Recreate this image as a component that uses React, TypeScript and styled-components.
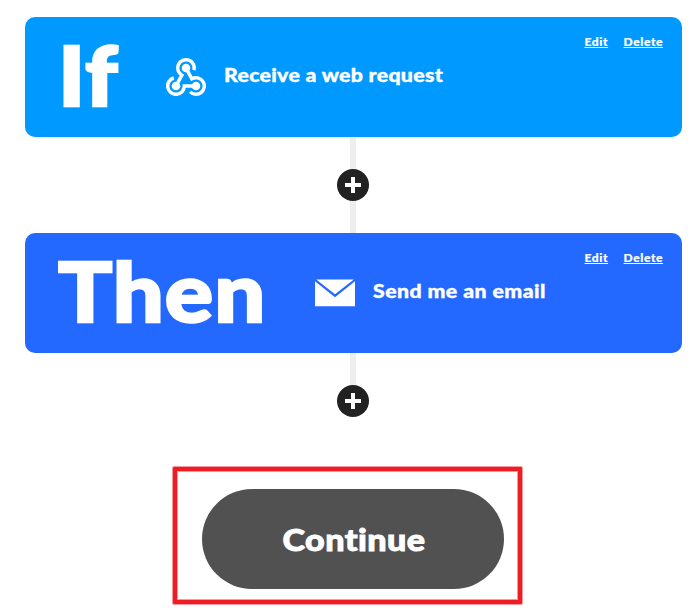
import React from 'react';
import styled, { createGlobalStyle } from 'styled-components';

const GlobalStyle = createGlobalStyle`
  * { box-sizing: border-box; }
  body { margin: 0; background: #fff; font-family: Lato, sans-serif; }
`;

const Page = styled.main`
  width: 694px;
  height: 612px;
  padding: 17px 12px 0 25px;
  display: flex;
  flex-direction: column;
  overflow: hidden;
`;

const Card = styled.section<{ $color: string; $inset: number }>`
  position: relative;
  height: 120px;
  flex: none;
  display: flex;
  align-items: flex-start;
  padding-left: ${(p) => p.$inset}px;
  border-radius: 10px;
  background: ${(p) => p.$color};
  color: #fff;
`;

const Keyword = styled.h1<{ $width: number; $spacing: number }>`
  flex: none;
  width: ${(p) => p.$width}px;
  margin: 5px 0 0;
  font-size: 82px;
  line-height: 104px;
  font-weight: 900;
  letter-spacing: ${(p) => p.$spacing}px;
  -webkit-text-stroke: 2.4px #fff;
  white-space: nowrap;
  transform: scaleX(1.1);
  transform-origin: 0 50%;
`;

const IconSlot = styled.span`
  flex: none;
  width: 40px;
  height: 40px;
  margin: 40px 18px 0 0;
  svg { display: block; }
`;

const Title = styled.h2<{ $spacing: number }>`
  margin: 46px 0 0;
  font-size: 19.5px;
  line-height: 24px;
  font-weight: 900;
  letter-spacing: ${(p) => p.$spacing}px;
  -webkit-text-stroke: 0.4px #fff;
  white-space: nowrap;
  transform: scaleX(1.09);
  transform-origin: 0 50%;
`;

const Actions = styled.nav`
  position: absolute;
  top: 17px;
  right: 19px;
  display: flex;
  gap: 15.5px;
`;

const Action = styled.a`
  color: #fff;
  font-size: 12px;
  line-height: 16px;
  font-weight: 900;
  letter-spacing: 0.6px;
  -webkit-text-stroke: 0.2px #fff;
  text-decoration: underline;
`;

const Connector = styled.div<{ $height: number }>`
  flex: none;
  margin-left: 312px;
  height: ${(p) => p.$height}px;
  width: 32px;
  display: flex;
  align-items: center;
  justify-content: center;
  background: linear-gradient(#eee, #eee) 13px 0 / 6px 100% no-repeat;
`;

const AddButton = styled.button`
  width: 32px;
  height: 32px;
  flex: none;
  padding: 0;
  border: 0;
  border-radius: 50%;
  background: #222;
  svg { display: block; }
`;

const Tail = styled(Connector)`
  align-items: flex-end;
`;

const Highlight = styled.div`
  width: 349px;
  height: 137px;
  flex: none;
  margin: 50px 0 0 148px;
  padding: 18px 0 0 25px;
  border: 4px solid #ee1c25;
  border-radius: 1px;
  box-shadow: 0 0 0 1px rgba(238, 28, 37, 0.45), inset 0 0 0 1px rgba(238, 28, 37, 0.45);
`;

const Continue = styled.button`
  display: block;
  width: 302px;
  height: 100px;
  padding: 0;
  border: 0;
  border-radius: 50px;
  background: #515151;
  color: #fff;
  font: 900 31px/40px Lato, sans-serif;
  letter-spacing: 0.4px;
`;

const ContinueLabel = styled.span`
  display: inline-block;
  -webkit-text-stroke: 0.9px #fff;
  transform: translateX(1px) scaleX(1.1);
`;

const WebhookIcon = () => (
  <svg width="40" height="40" viewBox="0 0 40 40" fill="none" stroke="#fff" strokeWidth="3.5">
    <g transform="translate(0 1)">
      <path d="M28 12.1A8.3 8.3 0 1 0 15.85 17.19L10 28" />
      <path d="M7.85 19.98A8.3 8.3 0 1 0 18.3 28H30" />
      <path d="M24.13 33.87A8.3 8.3 0 1 0 25.85 20.81L20 10" />
      <g fill="#fff" stroke="none">
        <circle cx="20" cy="10" r="4.3" />
        <circle cx="10" cy="28" r="4.3" />
        <circle cx="30" cy="28" r="4.3" />
      </g>
    </g>
  </svg>
);

const MailIcon = () => (
  <svg width="40" height="40" viewBox="0 0 40 40" fill="#fff">
    <path d="M1.2 6.5H38.8L20 21.2ZM0 8.2L20 24.2L40 8.2V33.3H0Z" />
  </svg>
);

const Plus = () => (
  <AddButton aria-label="Add">
    <svg width="32" height="32" viewBox="0 0 32 32" fill="#fff">
      <path d="M14 8h4v6h6v4h-6v6h-4v-6H8v-4h6z" />
    </svg>
  </AddButton>
);

const CardActions = () => (
  <Actions>
    <Action>Edit</Action>
    <Action>Delete</Action>
  </Actions>
);

export default function App() {
  return (
    <>
      <GlobalStyle />
      <Page>
        <Card $color="#0099ff" $inset={33}>
          <Keyword $width={108} $spacing={1}>If</Keyword>
          <IconSlot><WebhookIcon /></IconSlot>
          <Title $spacing={0.3}>Receive a web request</Title>
          <CardActions />
        </Card>
        <Connector $height={96}><Plus /></Connector>
        <Card $color="#2369ff" $inset={33}>
          <Keyword $width={257} $spacing={0.9}>Then</Keyword>
          <IconSlot><MailIcon /></IconSlot>
          <Title $spacing={0.4}>Send me an email</Title>
          <CardActions />
        </Card>
        <Tail $height={64}><Plus /></Tail>
        <Highlight><Continue><ContinueLabel>Continue</ContinueLabel></Continue></Highlight>
      </Page>
    </>
  );
}
